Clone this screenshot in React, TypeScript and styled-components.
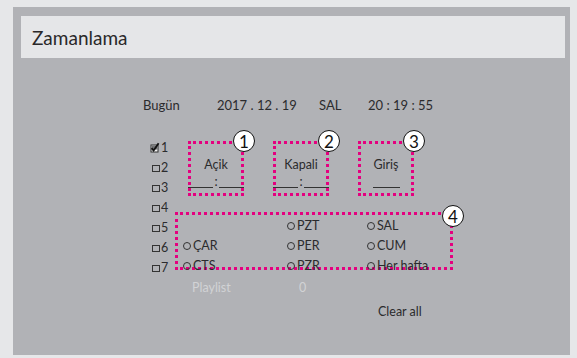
import styled, { createGlobalStyle } from 'styled-components';

const GlobalStyle = createGlobalStyle`
    html, body {
        margin: 0;
        background: #e6e7e9;
        font-family: Lato, "Open Sans", sans-serif;
        color: #2b2b2d;
    }
`

const days: (string | null)[] = [null, 'PZT', 'SAL', 'ÇAR', 'PER', 'CUM', 'CTS', 'PZR', 'Her hafta']

const CheckMark = () => (
    <svg width="10" height="11" viewBox="0 0 10 11">
        <rect x="1" y="3" width="7" height="7" fill="#f1f1f1" stroke="#333" strokeWidth="1" />
        <rect x="1.5" y="3.5" width="6" height="4" fill="#6f7073" />
        <path d="M1.6 6.2 L3.6 8.6 L8.6 1.2" fill="none" stroke="#111" strokeWidth="1.8" />
    </svg>
)

const App = () => {
    return (
        <>
            <GlobalStyle />
            <StyledPanel>
                <StyledTitleBar>Zamanlama</StyledTitleBar>
                <StyledContent>
                    <StyledToday>
                        <span>Bugün</span>
                        <span>2017 . 12 . 19</span>
                        <span>SAL</span>
                        <span>20 : 19 : 55</span>
                    </StyledToday>

                    <StyledSection>
                        <StyledCheckList>
                            {[1, 2, 3, 4, 5, 6, 7].map((n) => (
                                <StyledCheckRow key={n}>
                                    {n === 1 ? <CheckMark /> : <StyledSquare />}
                                    {n}
                                </StyledCheckRow>
                            ))}
                        </StyledCheckList>

                        <StyledRight>
                            <StyledBoxRow>
                                <StyledBox>
                                    <StyledCallout>1</StyledCallout>
                                    <StyledLabel>Açik</StyledLabel>
                                    <StyledTime>
                                        <StyledBlank />:<StyledBlank />
                                    </StyledTime>
                                </StyledBox>
                                <StyledBox>
                                    <StyledCallout>2</StyledCallout>
                                    <StyledLabel>Kapali</StyledLabel>
                                    <StyledTime>
                                        <StyledBlank />:<StyledBlank />
                                    </StyledTime>
                                </StyledBox>
                                <StyledBox>
                                    <StyledCallout>3</StyledCallout>
                                    <StyledLabel>Giriş</StyledLabel>
                                    <StyledTime>
                                        <StyledBlank $w={27} />
                                    </StyledTime>
                                </StyledBox>
                            </StyledBoxRow>

                            <StyledDaysBox>
                                <StyledCallout $top={-10}>4</StyledCallout>
                                {days.map((d, i) => (
                                    <StyledDay key={i}>
                                        {d && (
                                            <>
                                                <StyledRadio />
                                                {d}
                                            </>
                                        )}
                                    </StyledDay>
                                ))}
                            </StyledDaysBox>
                        </StyledRight>
                    </StyledSection>

                    <StyledPlaylist>
                        <span>Playlist</span>
                        <span>0</span>
                    </StyledPlaylist>
                    <StyledClear>Clear all</StyledClear>
                </StyledContent>
            </StyledPanel>
        </>
    );
};

export default App;

const StyledPanel = styled.div`
    box-sizing: border-box;
    width: 557px;
    height: 348px;
    margin: 7px 0 0 13px;
    padding: 9px 5px 0 8px;
    background: #b1b2b6;
    display: flex;
    flex-direction: column;
`
const StyledTitleBar = styled.div`
    height: 42px;
    background: #e5e6e8;
    display: flex;
    align-items: center;
    padding-left: 11px;
    font-size: 19px;
    color: #2a2829;
`
const StyledContent = styled.div`
    padding-left: 122px;
    font-size: 12.5px;
`
const StyledToday = styled.div`
    margin-top: 39px;
    display: grid;
    grid-template-columns: 74px 102px 49px auto;
    line-height: 16px;
    font-size: 13px;
`
const StyledSection = styled.div`
    display: flex;
    margin: 24px 0 0 7px;
`
const StyledCheckList = styled.div`
    width: 25px;
    display: flex;
    flex-direction: column;
`
const StyledCheckRow = styled.div`
    height: 20px;
    display: flex;
    align-items: center;
    gap: 1px;
`
const StyledSquare = styled.span`
    width: 6px;
    height: 5px;
    border: 1px solid #333;
    margin: 2px 0 0 2px;
`
const StyledRight = styled.div`
    display: flex;
    flex-direction: column;
`
const StyledBoxRow = styled.div`
    display: flex;
    gap: 29px;
    margin: 4px 0 0 13px;
`
const StyledBox = styled.div`
    position: relative;
    box-sizing: border-box;
    width: 56px;
    height: 55px;
    border: 3px dotted #e4007f;
    display: flex;
    flex-direction: column;
    align-items: center;
    padding-top: 14px;
`
const StyledCallout = styled.div<{ $top?: number }>`
    position: absolute;
    top: ${(p) => p.$top ?? -14}px;
    right: -14px;
    box-sizing: border-box;
    width: 22px;
    height: 22px;
    border-radius: 50%;
    border: 1.8px solid #111;
    background: #fff;
    color: #111;
    font-size: 17px;
    display: flex;
    align-items: center;
    justify-content: center;
    line-height: 1;
`
const StyledLabel = styled.div`
    line-height: 14px;
`
const StyledTime = styled.div`
    margin-top: 4px;
    height: 12px;
    display: flex;
    align-items: flex-end;
    line-height: 12px;
`
const StyledBlank = styled.span<{ $w?: number }>`
    width: ${(p) => p.$w ?? 25}px;
    border-bottom: 1px solid #333;
    margin: 0 1px;
`
const StyledDaysBox = styled.div`
    position: relative;
    box-sizing: border-box;
    margin-top: 16px;
    width: 278px;
    height: 58px;
    border: 3px dotted #e4007f;
    padding-left: 5px;
    display: grid;
    grid-template-columns: 104px 80px auto;
    grid-auto-rows: 20px;
`
const StyledDay = styled.div`
    display: flex;
    align-items: center;
    white-space: nowrap;
`
const StyledRadio = styled.span`
    box-sizing: border-box;
    width: 8px;
    height: 8px;
    border-radius: 50%;
    border: 1px solid #333;
    margin: 2px 2px 0 0;
`
const StyledPlaylist = styled.div`
    display: grid;
    grid-template-columns: 107px auto;
    margin-left: 49px;
    height: 20px;
    align-items: center;
    color: #d2d3d5;
`
const StyledClear = styled.div`
    margin: 5px 0 0 235px;
    line-height: 20px;
`
